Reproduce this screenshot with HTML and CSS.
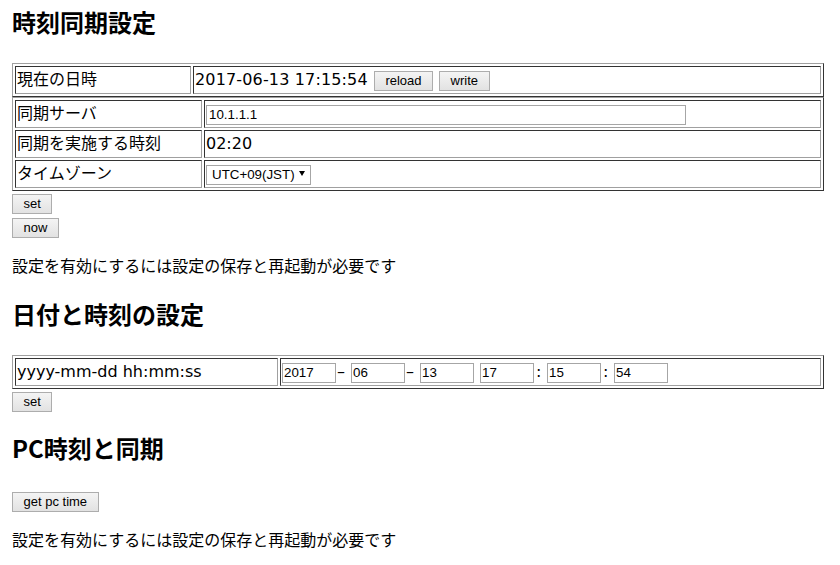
FILE: index.html
```html
<!DOCTYPE html>
<html lang="ja">
<head>
<meta charset="utf-8">
<title>時刻同期設定</title>
<link rel="stylesheet" href="styles.css">
</head>
<body>
<div class="page">
  <h2 class="first">時刻同期設定</h2>
  <table class="grid t1">
    <tr>
      <td class="label">現在の日時</td>
      <td><span class="now-text">2017-06-13 17:15:54</span> <button class="btn">reload</button> <button class="btn">write</button></td>
    </tr>
  </table>
  <table class="grid t2">
    <tr>
      <td class="label">同期サーバ</td>
      <td><input class="txt server" type="text" value="10.1.1.1"></td>
    </tr>
    <tr>
      <td class="label">同期を実施する時刻</td>
      <td>02:20</td>
    </tr>
    <tr>
      <td class="label">タイムゾーン</td>
      <td><span class="sel"><select><option>UTC+09(JST)</option></select><svg class="arrow" viewBox="0 0 6 5" width="6" height="5"><polygon points="0,0 6,0 3,5" fill="#000"/></svg></span></td>
    </tr>
  </table>
  <div class="line"><button class="btn">set</button></div>
  <div class="line"><button class="btn">now</button></div>
  <p>設定を有効にするには設定の保存と再起動が必要です</p>

  <h2>日付と時刻の設定</h2>
  <table class="grid t3">
    <tr>
      <td class="label">yyyy-mm-dd hh:mm:ss</td>
      <td><input class="txt d" type="text" value="2017"><span class="dash">–</span><input class="txt d" type="text" value="06"><span class="dash">–</span><input class="txt d" type="text" value="13"><input class="txt d gap" type="text" value="17"><span class="colon">:</span><input class="txt d" type="text" value="15"><span class="colon">:</span><input class="txt d" type="text" value="54"></td>
    </tr>
  </table>
  <div class="line"><button class="btn">set</button></div>

  <h2>PC時刻と同期</h2>
  <p><button class="btn">get pc time</button></p>
  <p>設定を有効にするには設定の保存と再起動が必要です</p>
</div>
</body>
</html>
```

FILE: styles.css
```css
* {
  box-sizing: border-box;
}

html,
body {
  margin: 0;
  padding: 0;
  background: #fff;
}

body {
  font-family: "DejaVu Sans", "Noto Sans CJK JP", sans-serif;
  font-size: 16px;
  line-height: 24px;
  color: #000;
}

.page {
  padding: 7px 16px 0 12px;
}

h2 {
  font-family: "Noto Sans CJK JP", sans-serif;
  font-size: 24px;
  line-height: 30px;
  font-weight: bold;
  margin: 20px 0 26px;
}

h2.first {
  margin-top: 0;
}

p {
  margin: 16px 0;
}

.line {
  height: 24px;
}

.grid {
  width: 812px;
  table-layout: fixed;
  border-collapse: separate;
  border-spacing: 2px;
  border: 1px solid;
  border-color: #a0a0a0 #333 #333 #a0a0a0;
}

.grid td {
  border: 1px solid;
  border-color: #333 #a0a0a0 #a0a0a0 #333;
  padding: 1px;
  height: 28px;
  vertical-align: middle;
  white-space: nowrap;
}

.t1 .label {
  width: 176px;
}

.t2 .label {
  width: 187px;
}

.t3 .label {
  width: 263px;
}

.now-text {
  letter-spacing: 0.15px;
}

.btn {
  font-family: "Liberation Sans", Arial, sans-serif;
  font-size: 13px;
  line-height: 16px;
  height: 20px;
  margin: 0 0 0 1px;
  padding: 0 10.5px;
  border: 1px solid #adadad;
  border-radius: 0;
  background: linear-gradient(#f4f4f4, #e2e2e2);
  color: #000;
}

.line .btn,
p .btn {
  margin-left: 0;
}

.txt {
  font-family: "Liberation Sans", Arial, sans-serif;
  font-size: 13.33px;
  height: 20px;
  margin: 0;
  padding: 0 2px;
  border: 1px solid #a6a6a6;
  background: #fff;
  color: #000;
}

.server {
  width: 480px;
}

.d {
  width: 54px;
  padding: 0 1px;
}

.d.gap {
  margin-left: 6px;
}

.dash {
  display: inline-block;
  width: 15px;
  padding-left: 1px;
}

.colon {
  display: inline-block;
  width: 13px;
  padding-left: 2px;
}

.sel {
  position: relative;
  display: inline-block;
  vertical-align: middle;
}

.sel select {
  display: block;
  -webkit-appearance: none;
  appearance: none;
  font-family: "Liberation Sans", Arial, sans-serif;
  font-size: 13.33px;
  width: 105px;
  height: 20px;
  margin: 0;
  padding: 0 0 0 5px;
  border: 1px solid #a6a6a6;
  border-radius: 0;
  background: #fff;
  color: #000;
}

.sel .arrow {
  position: absolute;
  right: 6px;
  top: 6px;
  pointer-events: none;
}
```
